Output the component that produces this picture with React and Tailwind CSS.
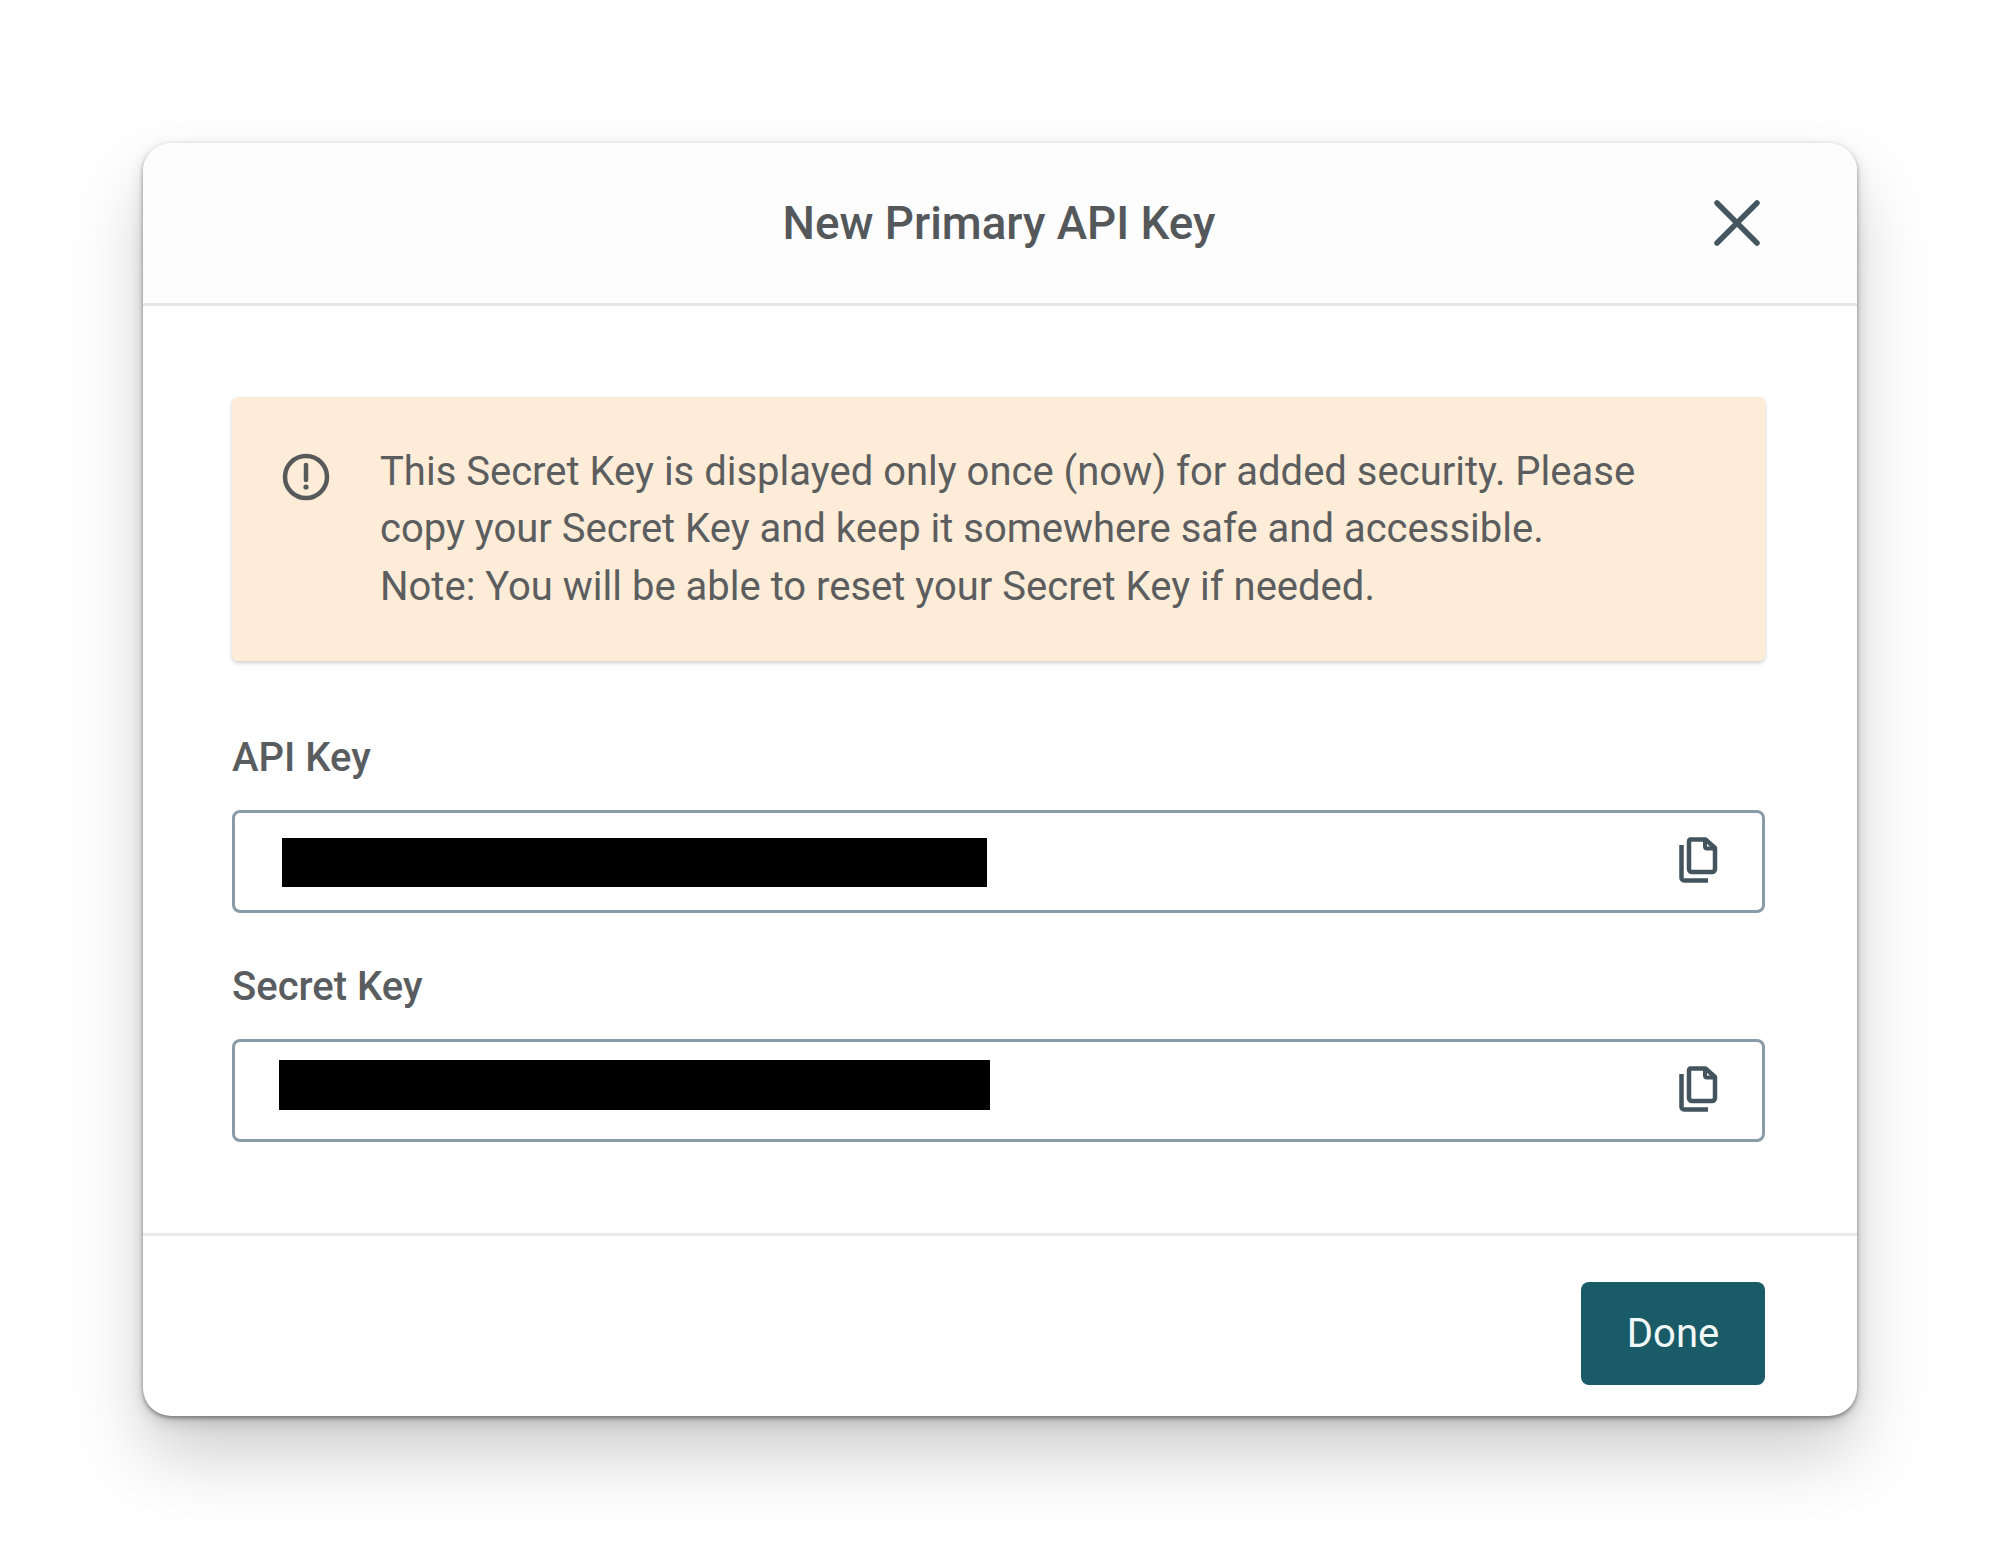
function CopyIcon() {
  return (
    <svg width="40" height="47" viewBox="0 0 40 47" fill="none" stroke="#44545f" strokeWidth="4.5" className="shrink-0 mb-[5px]">
      <path d="M12 3.5h15.5l9.5 8.5v21a3 3 0 0 1-3 3H14a3 3 0 0 1-3-3V5.5a2 2 0 0 1 1-2z" strokeLinejoin="round" />
      <path d="M27 3.5v7a2 2 0 0 0 2 2h8" strokeWidth="4" />
      <path d="M3.5 9v33a2.5 2.5 0 0 0 2.5 2.5h24" />
    </svg>
  );
}

function KeyField({ label, barClass, className }) {
  return (
    <div className={className}>
      <label className="block text-[40px] leading-[46px] font-medium text-[#5a5d5f]">{label}</label>
      <div className="mt-[29px] h-[103px] flex items-center justify-between border-[3px] border-[#8a9ba8] rounded-[8px] pr-[44px]">
        <div className={barClass} />
        <CopyIcon />
      </div>
    </div>
  );
}

export default function App() {
  return (
    <div className="min-h-[1559px] bg-[#fefefe] px-[143px] pt-[143px] font-['Roboto',sans-serif]">
      <div className="w-[1714px] rounded-[28px] bg-white shadow-[0_2px_4px_rgba(0,0,0,0.4),0_6px_16px_rgba(0,0,0,0.14),0_40px_70px_-4px_rgba(0,0,0,0.2)]">
        <header className="relative h-[163px] flex items-center justify-center bg-[#fdfdfd] rounded-t-[28px] border-b-[3px] border-[#e6e6e6]">
          <h2 className="text-[45.75px] font-medium text-[#54585b] -ml-[2px] mt-[2px]">New Primary API Key</h2>
          <button className="absolute right-[97px] top-[57px]">
            <svg width="46" height="46" viewBox="0 0 46 46" stroke="#455660" strokeWidth="5.5" strokeLinecap="round" className="block">
              <path d="M3 3l40 40M43 3L3 43" />
            </svg>
          </button>
        </header>

        <div className="pl-[89px] pr-[92px] pt-[91px] pb-[91px] border-b-[3px] border-[#e9e9e9]">
          <div className="flex h-[264px] rounded-[6px] bg-[#fdecd8] shadow-[0_2px_4px_rgba(0,0,0,0.2)] pl-[50px] pt-[46px]">
            <svg width="48" height="48" viewBox="0 0 48 48" fill="none" stroke="#57595a" strokeWidth="4.5" className="shrink-0 mt-[10px]">
              <circle cx="24" cy="24" r="21" />
              <path d="M24 12v15" strokeLinecap="round" />
              <circle cx="24" cy="34" r="2.6" fill="#57595a" stroke="none" />
            </svg>
            <p className="ml-[50px] text-[40px] leading-[57.3px] text-[#5b5d5e]">
              This Secret Key is displayed only once (now) for added security. Please
              <br />
              copy your Secret Key and keep it somewhere safe and accessible.
              <br />
              Note: You will be able to reset your Secret Key if needed.
            </p>
          </div>

          <KeyField
            label="API Key"
            className="mt-[74px]"
            barClass="ml-[47px] mt-[2px] h-[49px] w-[705px] bg-black"
          />
          <KeyField
            label="Secret Key"
            className="mt-[51px]"
            barClass="ml-[44px] -mt-[12px] h-[50px] w-[711px] bg-black"
          />
        </div>

        <footer className="flex justify-end pr-[92px] pt-[46px] pb-[31px]">
          <button className="w-[184px] h-[103px] rounded-[8px] bg-[#1a5b68] text-[40px] text-[#f2f7f8]">Done</button>
        </footer>
      </div>
    </div>
  );
}
